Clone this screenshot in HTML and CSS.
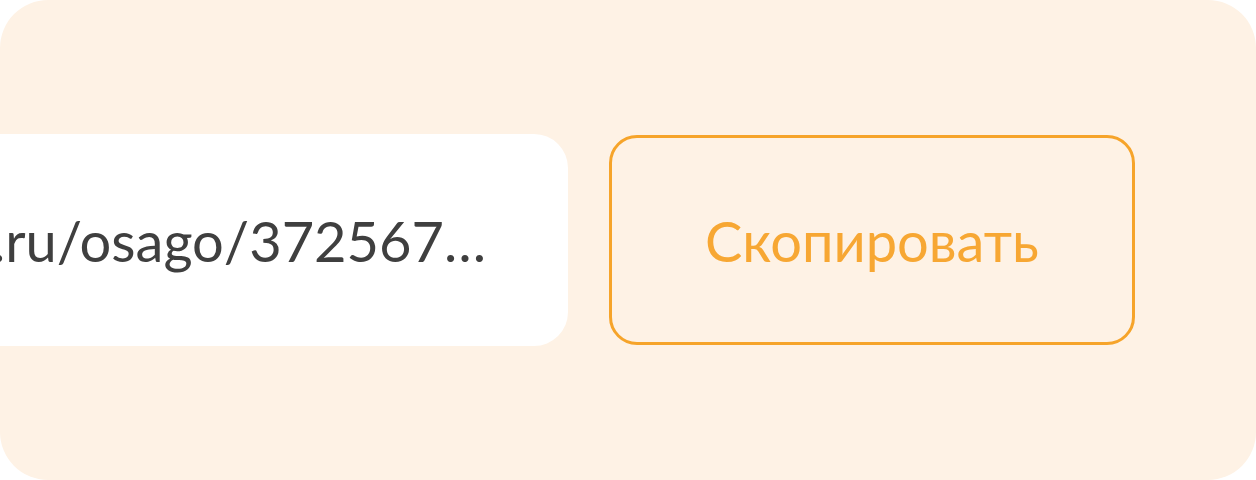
FILE: index.html
```html
<!DOCTYPE html>
<html lang="ru">
<head>
<meta charset="utf-8">
<link rel="stylesheet" href="styles.css">
</head>
<body>
<div class="card">
  <div class="link-field"><span class="link-text">.ru/osago/372567…</span></div>
  <button class="copy-btn">Скопировать</button>
</div>
</body>
</html>
```
FILE: styles.css
```css
html, body {
  margin: 0;
  padding: 0;
  background: #ffffff;
}
.card {
  width: 1256px;
  height: 480px;
  box-sizing: border-box;
  background: #fef2e5;
  border-radius: 48px;
  overflow: hidden;
  display: flex;
  align-items: center;
  gap: 41px;
  font-family: Lato, "Noto Sans", sans-serif;
}
.link-field {
  flex: none;
  width: 640px;
  height: 212px;
  margin-left: -72px;
  box-sizing: border-box;
  padding-left: 64px;
  background: #ffffff;
  border-radius: 34px;
  display: flex;
  align-items: center;
}
.link-text {
  font-size: 56px;
  color: #3f3f3f;
  white-space: nowrap;
}
.copy-btn {
  flex: none;
  width: 526px;
  height: 210px;
  box-sizing: border-box;
  border: 3.5px solid #f6a42a;
  border-radius: 28px;
  background: transparent;
  color: #f7a733;
  font-family: Lato, "Noto Sans", sans-serif;
  font-size: 56px;
  padding: 0;
}
```
